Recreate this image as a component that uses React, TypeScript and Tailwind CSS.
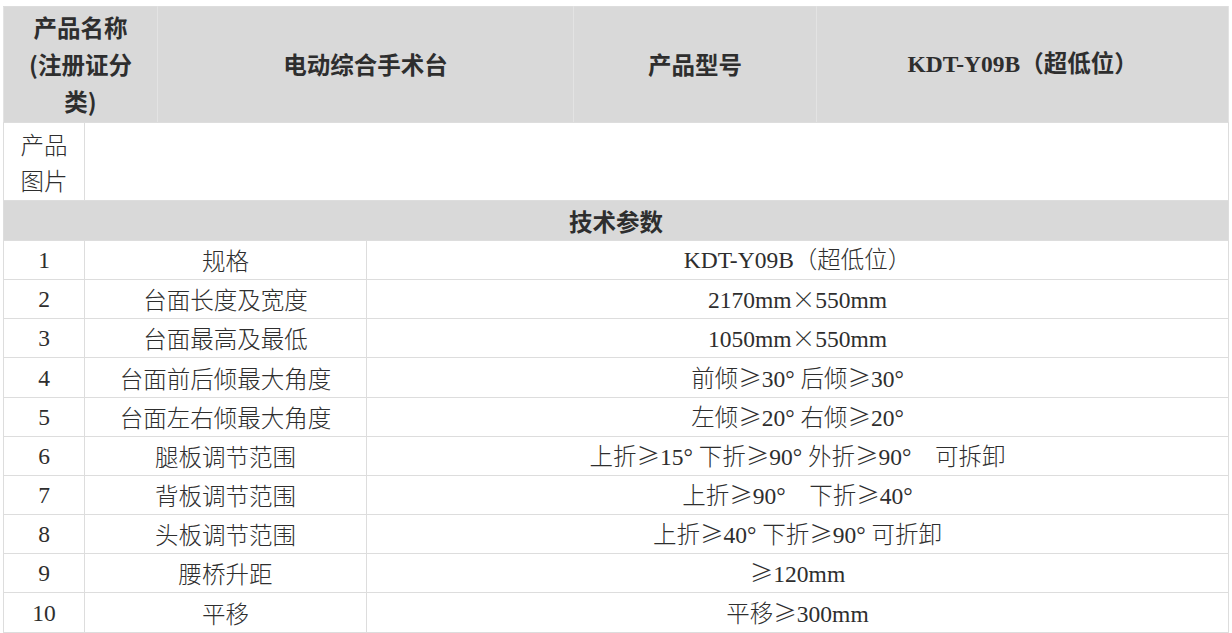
import React from "react";

const serif = "font-['Liberation_Serif','Noto_Sans_CJK_SC',serif]";
const sans = "font-['Noto_Sans_CJK_SC','Noto_Sans',sans-serif]";

const specs: [string, string][] = [
  ["规格", "KDT-Y09B（超低位）"],
  ["台面长度及宽度", "2170mm×550mm"],
  ["台面最高及最低", "1050mm×550mm"],
  ["台面前后倾最大角度", "前倾≥30° 后倾≥30°"],
  ["台面左右倾最大角度", "左倾≥20° 右倾≥20°"],
  ["腿板调节范围", "上折≥15° 下折≥90° 外折≥90°　可拆卸"],
  ["背板调节范围", "上折≥90°　下折≥40°"],
  ["头板调节范围", "上折≥40° 下折≥90° 可折卸"],
  ["腰桥升距", "≥120mm"],
  ["平移", "平移≥300mm"],
];

// symbols like ≥ and × are full width in the original song font
const Value = ({ text }: { text: string }) => (
  <>
    {text.split(/([≥×])/).map((part, i) =>
      part === "≥" || part === "×" ? (
        <span key={i} className={`${sans} font-light`}>
          {part}
        </span>
      ) : (
        <span key={i}>{part}</span>
      )
    )}
  </>
);

const cell = "border border-[#dddddd] p-0 text-center align-middle";
const headCell = "border border-[#dddddd] border-l-[#e3e3e3] border-r-[#e3e3e3] p-0 text-center align-middle";

export default function App() {
  return (
    <div className="bg-white w-[1232px] h-[633px] pt-[6px] pl-[3px]">
      <table className={`table-fixed border-collapse w-[1225px] text-[23.5px] text-[#2e2e2e] ${serif}`}>
        <colgroup>
          <col className="w-[81px]" />
          <col className="w-[73px]" />
          <col className="w-[209px]" />
          <col className="w-[207px]" />
          <col className="w-[243px]" />
          <col className="w-[412px]" />
        </colgroup>
        <tbody>
          <tr className="h-[116px] bg-[#d9d9d9] font-bold">
            <td colSpan={2} className={`${headCell} ${sans} leading-[37px]`}>
              产品名称
              <br />
              (注册证分
              <br />
              类)
            </td>
            <td colSpan={2} className={`${headCell} ${sans}`}>
              电动综合手术台
            </td>
            <td className={`${headCell} ${sans}`}>产品型号</td>
            <td className={headCell}>KDT-Y09B（超低位）</td>
          </tr>
          <tr className="h-[78px]">
            <td className={`${cell} ${sans} leading-[36px] font-light`}>
              产品
              <br />
              图片
            </td>
            <td colSpan={5} className={cell}></td>
          </tr>
          <tr className="h-[40px] bg-[#d9d9d9]">
            <td colSpan={6} className={`${cell} ${sans} font-bold leading-[38px]`}>
              技术参数
            </td>
          </tr>
          {specs.map(([name, value], i) => (
            <tr key={i} className={i === 3 || i === 9 ? "h-[40px]" : "h-[39px]"}>
              <td className={`${cell} leading-[34px]`}>{i + 1}</td>
              <td colSpan={2} className={`${cell} ${sans} font-light leading-[34px]`}>
                {name}
              </td>
              <td colSpan={3} className={`${cell} font-light leading-[34px] whitespace-pre`}>
                <Value text={value} />
              </td>
            </tr>
          ))}
        </tbody>
      </table>
    </div>
  );
}
